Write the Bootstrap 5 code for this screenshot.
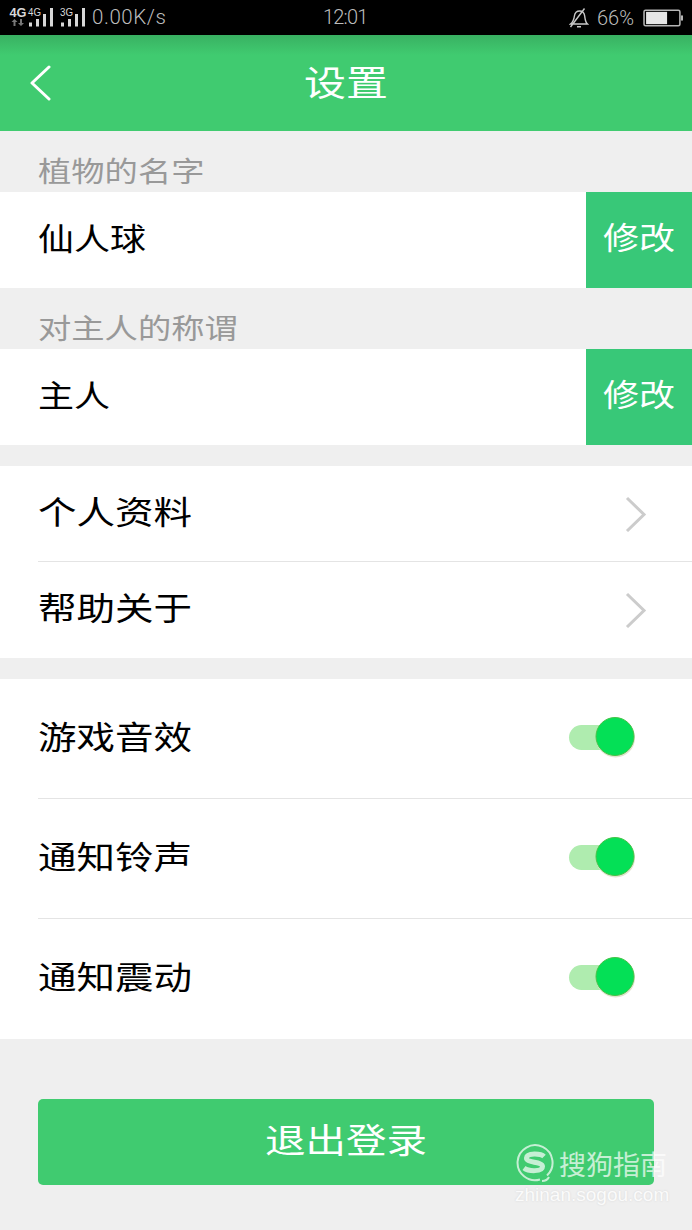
<!DOCTYPE html>
<html lang="zh-CN">
<head>
<meta charset="utf-8">
<meta name="viewport" content="width=device-width, initial-scale=1">
<title>设置</title>
<link href="https://cdn.jsdelivr.net/npm/bootstrap@5.3.0/dist/css/bootstrap.min.css" rel="stylesheet">
<style>
body{background:#efefef;font-family:"Noto Sans CJK SC",sans-serif;height:1230px;overflow:hidden;color:#000}
svg{display:block;flex:none}
.status{height:35px;background:#000;color:#bdbdbd;font:300 20px/34px Roboto,sans-serif}
.status .signal{margin-left:8px;width:80px}
.status .rate{margin-left:4px;font-size:20.5px;letter-spacing:.55px}
.status .clock{left:323px;top:0;letter-spacing:-.8px}
.status .percent{margin:0 9px 0 8px}
.topbar{height:96px;background:linear-gradient(#39b162,#40cb70 20px);color:#fff;padding-left:29px}
.topbar .heading{left:0;right:0;font-size:42px}
.brush{display:inline-block;transform:translateY(-3px) scaleY(.84);line-height:1;white-space:nowrap;font-weight:400}
.caption-bar{height:61px;color:#999;font-size:33.3px;padding:24px 0 0 38px}
.caption-bar .brush{transform:translateY(-2px) scaleY(.84)}
.field{height:96px;font-size:36px;padding-left:38px}
.btn-edit{width:106px;height:96px;background:#38c878;color:#fff;font-size:36px;--bs-btn-hover-color:#fff;--bs-btn-hover-bg:#34bc71}
.btn-edit .brush{transform:translateY(-4px) scaleY(.84)}
.list-group{--bs-list-group-border-radius:0;font-size:38.5px}
.entry{height:96px;margin-left:38px;border-bottom:1px solid #e4e4e4;padding-right:45px}
.entry:last-child{border-bottom-color:transparent}
.tall .entry{height:120px;padding-right:56px}
.tall .entry svg{margin-bottom:4px}
.gap-bar{height:21px}
.logout{margin:60px 38px 0;height:86px;border-radius:5px;background:#40cb70;color:#fff;font-size:40.5px;width:616px;--bs-btn-hover-color:#fff;--bs-btn-hover-bg:#3bbd68}
.stamp{left:514px;top:1140px;color:#fff;pointer-events:none}
.stamp .name{font-size:27px;line-height:44px;margin-left:5px;padding-top:2px;opacity:.7}
.stamp .site{font:19px/22px "Liberation Sans",sans-serif;opacity:.75;text-shadow:0 0 2px #ccc;margin:-2px 0 0 1px}
</style>
</head>
<body class="position-relative">
<div class="status d-flex position-relative">
  <svg class="signal" height="35" viewBox="8 0 80 35" fill="#d8d8d8" font-family="Liberation Sans, sans-serif" font-weight="bold">
    <text x="9.500" y="17" font-size="12" textLength="17" lengthAdjust="spacingAndGlyphs">4G</text>
    <text x="28" y="16" font-size="10" textLength="13" lengthAdjust="spacingAndGlyphs" font-weight="normal">4G</text>
    <text x="60" y="16" font-size="10" textLength="13" lengthAdjust="spacingAndGlyphs" font-weight="normal">3G</text>
    <path d="M11.500 22l3-3 3 3h-2v4h-2v-4zM18 23h2v-4h2v4h2l-3 3z" fill="#777"/>
    <path d="M29 22.500h3v4h-3zM36 19h3v7.500h-3zM43 14h3v12.500h-3zM50 8h3v18.500h-3zM61 22.500h3v4h-3zM68 19h3v7.500h-3zM75 14h3v12.500h-3zM82 8h3v18.500h-3z"/>
  </svg>
  <span class="rate">0.00K/s</span>
  <span class="clock position-absolute">12:01</span>
  <div class="ms-auto d-flex align-items-center pe-2">
    <svg width="20" height="22" viewBox="0 0 20 22" fill="none" stroke="#c8c8c8" stroke-width="1.400"><path d="M1.500 17h17c-2.200-2-2.300-4-2.800-8-.4-3-2-5-5-5s-4.900 2-5.300 5c-.5 4-1.400 6-3.900 8zM1.500 20L15.500 1.500M8 19.800h4"/></svg>
    <span class="percent">66%</span>
    <svg width="41" height="20" viewBox="0 0 40 18"><rect x="1" y="1.500" width="35" height="15" rx="1.500" fill="none" stroke="#b5b5b5" stroke-width="1.500"/><path d="M3 3h20.500v12H3z" fill="#e6e6e6"/><path d="M37 6.500h2v5h-2z" fill="#b5b5b5"/></svg>
  </div>
</div>

<header class="topbar d-flex align-items-center position-relative">
  <svg width="24" height="36" viewBox="0 0 24 36" fill="none" stroke="#fff" stroke-width="3" stroke-linecap="round" stroke-linejoin="round"><path d="M20 2L3 18l17 16"/></svg>
  <div class="heading position-absolute text-center"><span class="brush">设置</span></div>
</header>

<main>
  <div class="caption-bar lh-1"><span class="brush">植物的名字</span></div>
  <div class="field bg-white d-flex align-items-center justify-content-between"><span class="brush">仙人球</span><button class="btn btn-edit rounded-0 border-0 p-0"><span class="brush">修改</span></button></div>
  <div class="caption-bar lh-1"><span class="brush">对主人的称谓</span></div>
  <div class="field bg-white d-flex align-items-center justify-content-between"><span class="brush">主人</span><button class="btn btn-edit rounded-0 border-0 p-0"><span class="brush">修改</span></button></div>
  <div class="gap-bar"></div>
  <div class="list-group bg-white">
    <div class="entry d-flex align-items-center justify-content-between"><span class="brush">个人资料</span>
      <svg width="22" height="36" viewBox="0 0 22 36" fill="none" stroke="#ccc" stroke-width="3"><path d="M2 2l17 16.500L2 35"/></svg></div>
    <div class="entry d-flex align-items-center justify-content-between"><span class="brush">帮助关于</span>
      <svg width="22" height="36" viewBox="0 0 22 36" fill="none" stroke="#ccc" stroke-width="3"><path d="M2 2l17 16.500L2 35"/></svg></div>
  </div>
  <div class="gap-bar"></div>
  <div class="list-group tall bg-white">
    <div class="entry d-flex align-items-center justify-content-between"><span class="brush">游戏音效</span>
      <svg width="68" height="44" viewBox="0 0 68 44"><rect x="1" y="10" width="50" height="25" rx="12.500" fill="#afecaf"/><circle cx="47.500" cy="23" r="19.500" fill="#e0e4d0"/><circle cx="47" cy="21.500" r="19" fill="#04e056" stroke="#45c347"/></svg></div>
    <div class="entry d-flex align-items-center justify-content-between"><span class="brush">通知铃声</span>
      <svg width="68" height="44" viewBox="0 0 68 44"><rect x="1" y="10" width="50" height="25" rx="12.500" fill="#afecaf"/><circle cx="47.500" cy="23" r="19.500" fill="#e0e4d0"/><circle cx="47" cy="21.500" r="19" fill="#04e056" stroke="#45c347"/></svg></div>
    <div class="entry d-flex align-items-center justify-content-between"><span class="brush">通知震动</span>
      <svg width="68" height="44" viewBox="0 0 68 44"><rect x="1" y="10" width="50" height="25" rx="12.500" fill="#afecaf"/><circle cx="47.500" cy="23" r="19.500" fill="#e0e4d0"/><circle cx="47" cy="21.500" r="19" fill="#04e056" stroke="#45c347"/></svg></div>
  </div>
  <button class="btn logout border-0 p-0"><span class="brush">退出登录</span></button>
</main>

<div class="stamp position-absolute">
  <div class="d-flex align-items-center">
    <svg width="40" height="42" viewBox="0 0 40 42" fill="none" stroke="#fff" opacity=".7"><path d="M26 37.500A17.500 17.500 0 1 1 33 33.500M28 39c3 0 6-2 7-4" stroke-width="2"/><path d="M30 14.500c-3-3-17-4-17.500 1.500-.5 5 16 3.500 16 8.500 0 5.500-14 5-18.500 1.500" stroke-width="5"/></svg>
    <span class="name">搜狗指南</span>
  </div>
  <div class="site">zhinan.sogou.com</div>
</div>
<script src="https://cdn.jsdelivr.net/npm/bootstrap@5.3.0/dist/js/bootstrap.bundle.min.js"></script>
</body>
</html>
